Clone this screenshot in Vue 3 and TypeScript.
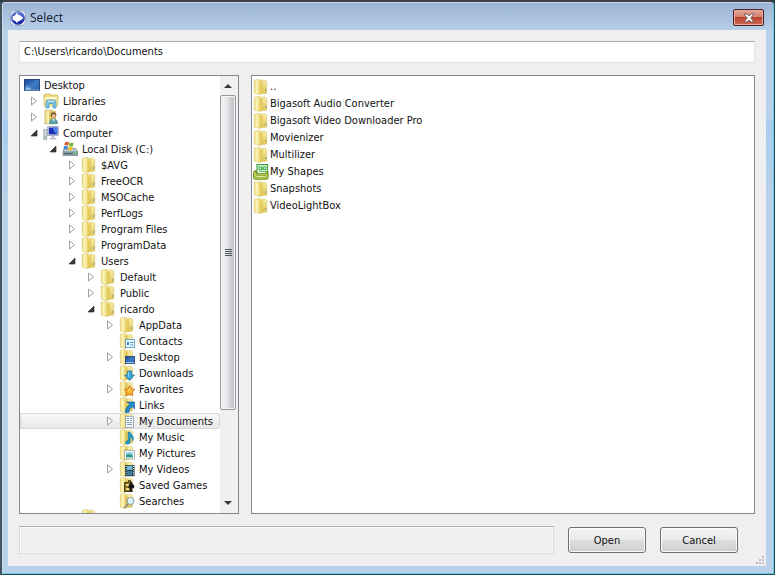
<script setup lang="ts">
import { ref } from 'vue'

interface TreeNode {
  label: string
  level: number
  icon: string
  state?: 'open' | 'closed'
}

const tree: TreeNode[] = [
  { label: 'Desktop', level: 0, icon: 'screen' },
  { label: 'Libraries', level: 1, icon: 'libraries', state: 'closed' },
  { label: 'ricardo', level: 1, icon: 'user', state: 'closed' },
  { label: 'Computer', level: 1, icon: 'computer', state: 'open' },
  { label: 'Local Disk (C:)', level: 2, icon: 'disk', state: 'open' },
  { label: '$AVG', level: 3, icon: 'folder', state: 'closed' },
  { label: 'FreeOCR', level: 3, icon: 'folder', state: 'closed' },
  { label: 'MSOCache', level: 3, icon: 'folder', state: 'closed' },
  { label: 'PerfLogs', level: 3, icon: 'folder', state: 'closed' },
  { label: 'Program Files', level: 3, icon: 'folder', state: 'closed' },
  { label: 'ProgramData', level: 3, icon: 'folder', state: 'closed' },
  { label: 'Users', level: 3, icon: 'folder', state: 'open' },
  { label: 'Default', level: 4, icon: 'folder', state: 'closed' },
  { label: 'Public', level: 4, icon: 'folder', state: 'closed' },
  { label: 'ricardo', level: 4, icon: 'folder', state: 'open' },
  { label: 'AppData', level: 5, icon: 'folder', state: 'closed' },
  { label: 'Contacts', level: 5, icon: 'contacts' },
  { label: 'Desktop', level: 5, icon: 'desktop', state: 'closed' },
  { label: 'Downloads', level: 5, icon: 'downloads' },
  { label: 'Favorites', level: 5, icon: 'favorites', state: 'closed' },
  { label: 'Links', level: 5, icon: 'links' },
  { label: 'My Documents', level: 5, icon: 'documents', state: 'closed' },
  { label: 'My Music', level: 5, icon: 'music' },
  { label: 'My Pictures', level: 5, icon: 'pictures' },
  { label: 'My Videos', level: 5, icon: 'videos', state: 'closed' },
  { label: 'Saved Games', level: 5, icon: 'games' },
  { label: 'Searches', level: 5, icon: 'searches' },
  { label: '', level: 3, icon: 'folder' },
]

const files = [
  { label: '..', icon: 'folder' },
  { label: 'Bigasoft Audio Converter', icon: 'folder' },
  { label: 'Bigasoft Video Downloader Pro', icon: 'folder' },
  { label: 'Movienizer', icon: 'folder' },
  { label: 'Multilizer', icon: 'folder' },
  { label: 'My Shapes', icon: 'shapes' },
  { label: 'Snapshots', icon: 'folder' },
  { label: 'VideoLightBox', icon: 'folder' },
]

const overlays = ['contacts', 'desktop', 'downloads', 'favorites', 'links', 'documents', 'music', 'pictures', 'videos', 'games', 'searches']

const path = ref('C:\\Users\\ricardo\\Documents')
const selected = ref('My Documents')
const indent = (level: number) => 4 + Math.max(0, level - 1) * 19 + 'px'
</script>

<template>
  <svg class="sprite" aria-hidden="true">
    <defs>
      <linearGradient id="g-front" x1="0" x2="1" y1="0" y2="0">
        <stop offset="0" stop-color="#ecd87c" />
        <stop offset=".4" stop-color="#fcf5bc" />
        <stop offset="1" stop-color="#ecd670" />
      </linearGradient>
      <linearGradient id="g-back" x1="0" x2="0" y1="0" y2="1">
        <stop offset="0" stop-color="#f8eeaa" />
        <stop offset="1" stop-color="#dfc252" />
      </linearGradient>
      <linearGradient id="g-screen" x1="0" x2="1" y1="0" y2="1">
        <stop offset="0" stop-color="#1d4596" />
        <stop offset=".55" stop-color="#3d7dc8" />
        <stop offset="1" stop-color="#2458a8" />
      </linearGradient>
      <linearGradient id="g-orb" x1="0" x2="0" y1="0" y2="1">
        <stop offset="0" stop-color="#7f96e6" />
        <stop offset=".5" stop-color="#2c40bc" />
        <stop offset="1" stop-color="#1824a0" />
      </linearGradient>
      <symbol id="i-folder" viewBox="0 0 16 16">
        <path d="M6 1.2h6l1.800 1.300v11.500L6 15z" fill="url(#g-back)" stroke="#dbc568" stroke-width=".6" />
        <path d="M1.300 1.200 6 .4l1.200 1v14.200L1.300 14.200z" fill="url(#g-front)" stroke="#dcc76c" stroke-width=".6" />
        <path d="M7.200 3.200 9.600 2v11.600l-2.400 1.900z" fill="#dabd44" />
        <path d="M8.200 3.200v11" stroke="#f5e588" stroke-width=".8" />
        <path d="M12.800 10v2" stroke="#7e9a8a" />
      </symbol>
      <symbol id="i-screen" viewBox="0 0 16 16">
        <rect x=".5" y="2.500" width="15" height="11" fill="url(#g-screen)" stroke="#2b4674" />
        <path d="M1 13h14" stroke="#8bb4dd" />
        <path d="M2 11.500h4" stroke="#cfe8f8" />
        <path d="M1 10l3-2 4 4-3 1H1z" fill="#74acd9" opacity=".6" />
      </symbol>
      <symbol id="i-libraries" viewBox="0 0 16 16">
        <path d="M1 2.500 2 1h5l1 1h6l1 1v10H1z" fill="#edd980" stroke="#cbb45c" stroke-width=".7" />
        <path d="M2 4h12v3H2z" fill="#fdf7ce" />
        <path d="M1 6h14v7H1z" fill="#f0df90" />
        <path d="M3 15V9.500Q3 7 5.500 7h5Q13 7 13 9.500V15h-3v-4.500H6V15z" fill="#78c7e8" stroke="#458db4" stroke-width=".7" />
        <path d="M4.500 8.300h7" stroke="#d8f3fc" />
      </symbol>
      <symbol id="i-user" viewBox="0 0 16 16">
        <path d="M2 1.200h7l1.500 1v12L2 15z" fill="url(#g-front)" stroke="#c5a954" stroke-width=".7" />
        <path d="M6 2h7v11H6z" fill="#e3c760" />
        <circle cx="10.500" cy="6" r="2.800" fill="#795536" />
        <circle cx="10.700" cy="7" r="2" fill="#e5b68c" />
        <path d="M6.500 14.800q0-5 4-5t4 5z" fill="#5fa5ae" stroke="#37737c" stroke-width=".6" />
        <path d="M9.400 10h2.200l-1 2.500z" fill="#e8f3f0" />
      </symbol>
      <symbol id="i-computer" viewBox="0 0 16 16">
        <path d="M.8 4.500h3v10h-3z" fill="#d8dde2" stroke="#858e98" stroke-width=".7" />
        <path d="M1.500 12h1.300" stroke="#52a055" />
        <path d="M4.600 1.500h10.800v9H4.600z" fill="#eef1f4" stroke="#8792a0" stroke-width=".7" />
        <path d="M5.700 2.500h8.700v7H5.700z" fill="#1b31b5" />
        <path d="M10 2.500h4.400V9Q10 7.500 10 2.500z" fill="#4c79ea" />
        <path d="M8.500 11h3v2h2v1.500h-7V13h2z" fill="#b7c0ca" />
      </symbol>
      <symbol id="i-disk" viewBox="0 0 16 16">
        <path d="M1 10l2-2.500h10.500l2 2.500v4.500H1z" fill="#b9ccd4" stroke="#62757f" stroke-width=".7" />
        <path d="M1.300 10.400h14v3.800h-14z" fill="#839ba4" />
        <path d="M2.500 12.500h8" stroke="#465b65" />
        <path d="M12.300 12h2" stroke="#65e45b" stroke-width="1.400" />
        <path d="M3 1.300q2.100-1.200 4 0L6.300 4.600q-2-1-4 0z" fill="#e5572c" />
        <path d="M7.500 1.500q2 1.200 4.200 0L11 5q-2 1-4.200 0z" fill="#72b83e" />
        <path d="M2 5.200q2-1 4 0l-.7 3.300q-2-1-4 0z" fill="#3f87d4" />
        <path d="M6.600 5.500q2 1 4.200 0L10 9q-2 1-4.100 0z" fill="#f5c22f" />
      </symbol>
      <symbol id="i-half" viewBox="0 0 16 16">
        <path d="M5 1.500h7.500l1 1V14L5 15z" fill="url(#g-back)" stroke="#dac776" stroke-width=".5" />
        <path d="M1.300 1.200 5.500.5l1.200 1v14L1.300 14.200z" fill="url(#g-front)" stroke="#dcc76c" stroke-width=".6" />
        <path d="M6.800 3 8.400 2v11.600l-1.600 1.600z" fill="#dabd44" />
      </symbol>
      <symbol id="i-contacts" viewBox="0 0 16 16">
        <rect x="6.400" y="6.400" width="9" height="8" fill="#eaf7ff" stroke="#4b96c8" stroke-width=".8" />
        <path d="M8 9h2v3H8z" fill="#3f86bc" /><path d="M11 9.500h3.300M11 12h3.300" stroke="#579bc9" />
      </symbol>
      <symbol id="i-desktop" viewBox="0 0 16 16">
        <rect x="6.400" y="7.400" width="9.200" height="7" fill="url(#g-screen)" stroke="#263f74" stroke-width=".8" />
        <path d="M7 13.600h8" stroke="#9ccdf2" />
      </symbol>
      <symbol id="i-downloads" viewBox="0 0 16 16">
        <path d="M8.500 6h4v4h3l-5 5.600-5-5.600h3z" fill="#37a5df" stroke="#156a9f" stroke-width=".7" />
        <path d="M9.400 7v5" stroke="#9be1ff" />
      </symbol>
      <symbol id="i-favorites" viewBox="0 0 16 16">
        <path d="m10.500 4.600 1.600 3.300 3.600.4-2.600 2.600.6 3.800-3.200-1.800-3.300 1.800.7-3.700L5.300 8.400 9 7.900z" fill="#ffb52a" stroke="#cb6a14" stroke-width=".8" />
        <path d="m10.500 6.500 1 2.300-2.500 2z" fill="#ffe788" />
      </symbol>
      <symbol id="i-links" viewBox="0 0 16 16">
        <path d="M8 5h7.600v7l-2.300-2.200Q10 11.500 9.700 15.500H6.500Q6.200 10 11 7.500z" fill="#248fcf" stroke="#105a91" stroke-width=".7" />
      </symbol>
      <symbol id="i-documents" viewBox="0 0 16 16">
        <path d="M6.500 3.400h8v11h-8z" fill="#f4f8fb" stroke="#8a9aa8" stroke-width=".8" />
        <path d="M8 5.500h2M11 5.500h2.200M8 7.500h2M11 7.500h2.200M8 9.500h5.200M8 11.500h5.200" stroke="#7892ac" stroke-width=".9" />
      </symbol>
      <symbol id="i-music" viewBox="0 0 16 16">
        <path d="M9.200 3h1.700q.3 2 2.400 3.300 2.200 2.500.4 5.800.3-3.200-2.500-4.200v5q-.4 2.400-3 2.400-2.300-.3-1.700-2.200.8-1.700 2.700-1.300z" fill="#2799c7" stroke="#126b98" stroke-width=".5" />
      </symbol>
      <symbol id="i-pictures" viewBox="0 0 16 16">
        <rect x="5.600" y="5.400" width="9.800" height="8.600" fill="#fff" stroke="#9aa3a9" stroke-width=".8" />
        <path d="M7 7h7v3H7z" fill="#8fd3ec" /><path d="M7 12.500V10l3-1 4 1.500v2z" fill="#369a85" />
      </symbol>
      <symbol id="i-videos" viewBox="0 0 16 16">
        <path d="M6 4.200h9.500v11H6z" fill="#253843" /><path d="M8 5h5.500v4H8z" fill="#76bddd" /><path d="M8 10h5.500v4.300H8z" fill="#3f7f9b" />
        <path d="M7 5v10M14.500 5v10" stroke="#e2edf0" stroke-width=".9" stroke-dasharray="1 1" />
      </symbol>
      <symbol id="i-games" viewBox="0 0 16 16">
        <path d="M5.500 5.500h4v-2h2v2h1v9h-7z" fill="#8a6c22" stroke="#352a18" stroke-width=".8" />
        <path d="M7 7h3v2H7zm0 4h3v2H7z" fill="#f3dc7c" />
        <path d="M12 4q.6 2 3 4.300 1.200 3.400-2.200 3.400.2 2 1.300 3H9.900q1.400-1 1.300-3-2.200-.4-1.600-2.600z" fill="#171717" />
      </symbol>
      <symbol id="i-searches" viewBox="0 0 16 16">
        <path d="m9.300 10.500-4 4.300" stroke="#8c8d85" stroke-width="1.800" />
        <circle cx="11.500" cy="8" r="3.500" fill="#d9f1fa" stroke="#869eab" />
        <path d="M9.800 7q1-1.500 2.800-1" stroke="#fff" fill="none" />
      </symbol>
      <symbol id="i-shapes" viewBox="0 0 16 16">
        <path d="M4 .7h10.500v12H4z" fill="#eefde4" stroke="#42a64a" stroke-width="1.200" />
        <path d="M6 3h2.600v2.500H6zm4.200 0h2.600v2.500h-2.600zM6 7.200h7" fill="none" stroke="#41af52" stroke-width="1.100" />
        <path d="M8.600 4.200h1.600" stroke="#41af52" />
        <path d="M3 6.500Q.8 7 .7 9v4.500q0 1.800 2 1.800h10.500q1.800 0 1.800-1.800V8h-2v1.800H3.500z" fill="#c9d450" stroke="#668a23" stroke-width="1.100" />
        <path d="M3 11.500h10v1.800H3z" fill="#f6f7b4" stroke="#7d9a2d" stroke-width=".7" />
      </symbol>
    </defs>
  </svg>

  <main class="window">
    <header class="title-bar">
      <svg class="app-icon" viewBox="0 0 16 16" aria-hidden="true">
        <rect x=".5" y=".5" width="15" height="15" rx="4" fill="#eef2fa" stroke="#8e9ec0" stroke-width=".8" />
        <circle cx="8" cy="8" r="6.600" fill="url(#g-orb)" stroke="#4957a8" stroke-width=".6" />
        <path d="M6.800 2.600Q7.500 5.400 10.400 5.600L13.600 8l-3.400 2.600Q7.600 10.800 7 13.600q-.6-2.800-4.400-3.900V6.400Q6.300 5.600 6.800 2.600z" fill="#fff" />
      </svg>
      <h1>Select</h1>
      <button class="close" type="button" aria-label="Close">
        <svg viewBox="0 0 12 10" aria-hidden="true">
          <path d="M1 1h3l2 2 2-2h3L7.800 5 11 9H8L6 7 4 9H1l3.200-4z" fill="#fff" stroke="#65434a" stroke-width=".8" />
        </svg>
      </button>
    </header>

    <section class="body">
      <input v-model="path" class="path" type="text" aria-label="Path" spellcheck="false" />

      <div class="panes">
        <div class="pane tree-pane">
          <ul class="tree" role="tree">
            <li
              v-for="(node, i) in tree"
              :key="i"
              role="treeitem"
              :class="{ selected: node.label === selected }"
              :style="{ paddingLeft: indent(node.level) }"
              @click="selected = node.label"
            >
              <span v-if="node.level > 0" class="twist">
                <svg v-if="node.state === 'closed'" viewBox="0 0 8 10"><path d="M1.500 1v8L6.500 5z" fill="#fff" stroke="#a0a0a0" /></svg>
                <svg v-else-if="node.state === 'open'" viewBox="0 0 8 10"><path d="M7 2v6H1z" fill="#3c3c3c" stroke="#222" stroke-width=".6" /></svg>
              </span>
              <svg class="icon" viewBox="0 0 16 16" aria-hidden="true">
                <use v-if="overlays.includes(node.icon)" href="#i-half" />
                <use :href="'#i-' + node.icon" />
              </svg>
              <span class="label">{{ node.label }}</span>
            </li>
          </ul>
          <div class="scrollbar">
            <button type="button" aria-label="Scroll up"><svg viewBox="0 0 8 4"><path d="M4 0l4 4H0z" fill="#3a3a3a" /></svg></button>
            <div class="track">
              <div class="thumb"><i></i><i></i><i></i><i></i></div>
            </div>
            <button type="button" aria-label="Scroll down"><svg viewBox="0 0 8 4"><path d="M0 0h8L4 4z" fill="#3a3a3a" /></svg></button>
          </div>
        </div>

        <div class="pane list-pane">
          <ul class="files">
            <li v-for="file in files" :key="file.label">
              <svg class="icon" viewBox="0 0 16 16" aria-hidden="true"><use :href="'#i-' + file.icon" /></svg>
              <span class="label">{{ file.label }}</span>
            </li>
          </ul>
        </div>
      </div>

      <footer class="actions">
        <input class="filename" type="text" aria-label="Selection" readonly />
        <button class="push" type="button">Open</button>
        <button class="push" type="button">Cancel</button>
      </footer>
      <svg class="grip" viewBox="0 0 10 10" aria-hidden="true">
        <path d="M7 1h2v2H7zM4 4h2v2H4zM7 4h2v2H7zM1 7h2v2H1zM4 7h2v2H4zM7 7h2v2H7z" fill="#c4bfc6" />
      </svg>
    </section>
  </main>
</template>

<style>
body {
  background: #17424b;
}
</style>

<style scoped>
* {
  box-sizing: border-box;
}

.sprite {
  position: absolute;
  width: 0;
  height: 0;
}

.window {
  display: flex;
  flex-direction: column;
  height: 100vh;
  min-height: 320px;
  padding: 0 8px 8px 6px;
  border: 1px solid #234a53;
  border-width: 2px 1px 1px 2px;
  border-top-color: #3d4045;
  border-left-color: #45545f;
  border-radius: 5px 5px 0 0;
  background: linear-gradient(#9bb4d4, #b9d0e9 30px, #b9d3ec 112px, #a9cdee 122px, #b9d1ea 200px);
  box-shadow: inset 1px 1px #c7daec, inset -1px -1px #63cce0;
  font-family: "DejaVu Sans Condensed", "DejaVu Sans", sans-serif;
  font-size: 11px;
  color: #111;
}

.title-bar {
  display: flex;
  flex: none;
  align-items: center;
  height: 28px;
  padding: 3px 2px 0 2px;
}

.app-icon {
  width: 16px;
  height: 16px;
}

h1 {
  flex: 1;
  margin: 0 0 0 4px;
  font: 12px "Open Sans", "Noto Sans", sans-serif;
  color: #14202e;
}

.close {
  display: grid;
  place-items: center;
  width: 31px;
  height: 17px;
  padding: 0;
  border: 1px solid #4c2028;
  border-radius: 2px;
  background: linear-gradient(#e0a497, #d2806f 48%, #bd422e 50%, #cf6b54);
  box-shadow: inset 0 0 0 1px #e6a99c;
}

.close svg {
  width: 12px;
  height: 10px;
}

.body {
  position: relative;
  display: flex;
  flex: 1;
  flex-direction: column;
  gap: 12px;
  min-height: 0;
  padding: 11px 11px 12px;
  background: #efefef;
}

input {
  font: inherit;
  color: inherit;
  outline: none;
}

.path {
  flex: none;
  width: 100%;
  height: 22px;
  padding: 0 4px 1px;
  border: 1px solid #dfe4ea;
  border-top-color: #abadb3;
  background: #fff;
}

.panes {
  display: flex;
  flex: 1;
  gap: 12px;
  min-height: 0;
}

.pane {
  border: 1px solid #828790;
  background: #fff;
  overflow: hidden;
}

.tree-pane {
  display: flex;
  flex: 0 0 220px;
}

.list-pane {
  flex: 1;
}

ul {
  margin: 0;
  padding: 0;
  list-style: none;
}

.tree {
  flex: 1;
  min-width: 0;
  padding-top: 1px;
}

li {
  display: flex;
  align-items: center;
  white-space: nowrap;
}

.tree li {
  height: 16px;
}

.tree .selected {
  border-radius: 0 3px 3px 0;
  background: linear-gradient(#f9f9f9, #e6e6e6);
  box-shadow: inset 0 0 0 1px #d9d9d9;
}

.twist {
  display: flex;
  flex: 0 0 19px;
  padding-left: 6px;
}

.twist svg {
  width: 8px;
  height: 10px;
}

.icon {
  flex: none;
  width: 16px;
  height: 16px;
}

.tree .label {
  margin-left: 4px;
}

.files {
  padding: 2px 1px;
}

.files li {
  height: 17px;
}

.files .label {
  margin-left: 1px;
}

.scrollbar {
  display: flex;
  flex: 0 0 18px;
  flex-direction: column;
  padding: 1px 2px 1px 0;
  background: #f0f0f0;
}

.scrollbar button {
  display: grid;
  flex: none;
  place-items: center;
  height: 18px;
  padding: 0;
  border: 0;
  background: none;
}

.scrollbar button svg {
  width: 8px;
  height: 4px;
}

.track {
  flex: 1;
  min-height: 0;
}

.thumb {
  display: flex;
  flex-direction: column;
  align-items: center;
  justify-content: center;
  gap: 1px;
  width: 16px;
  height: 79%;
  border: 1px solid #979797;
  border-radius: 2px;
  background: linear-gradient(90deg, #f5f5f5, #e6e6e8 45%, #d3d3d8 60%, #bfc0c6);
  box-shadow: inset 0 0 0 1px #f4f4f4;
}

.thumb i {
  width: 7px;
  height: 1px;
  background: #555a60;
}

.actions {
  display: flex;
  flex: none;
  align-items: center;
  padding-right: 17px;
}

.filename {
  flex: 1;
  min-width: 0;
  height: 28px;
  border: 1px solid #dcdcdc;
  border-top-color: #abadb3;
  background: #efefef;
  box-shadow: inset 0 0 0 1px #f7f7f7;
}

.push {
  width: 78px;
  height: 26px;
  margin-left: 14px;
  padding: 0;
  border: 1px solid #707070;
  border-radius: 3px;
  background: linear-gradient(#f3f3f3, #ebebeb 49%, #dddddd 51%, #cfcfcf);
  box-shadow: inset 0 0 0 1px #fafafa;
  font: inherit;
  color: #111;
}

.grip {
  position: absolute;
  right: 1px;
  bottom: 1px;
  width: 10px;
  height: 10px;
}
</style>
